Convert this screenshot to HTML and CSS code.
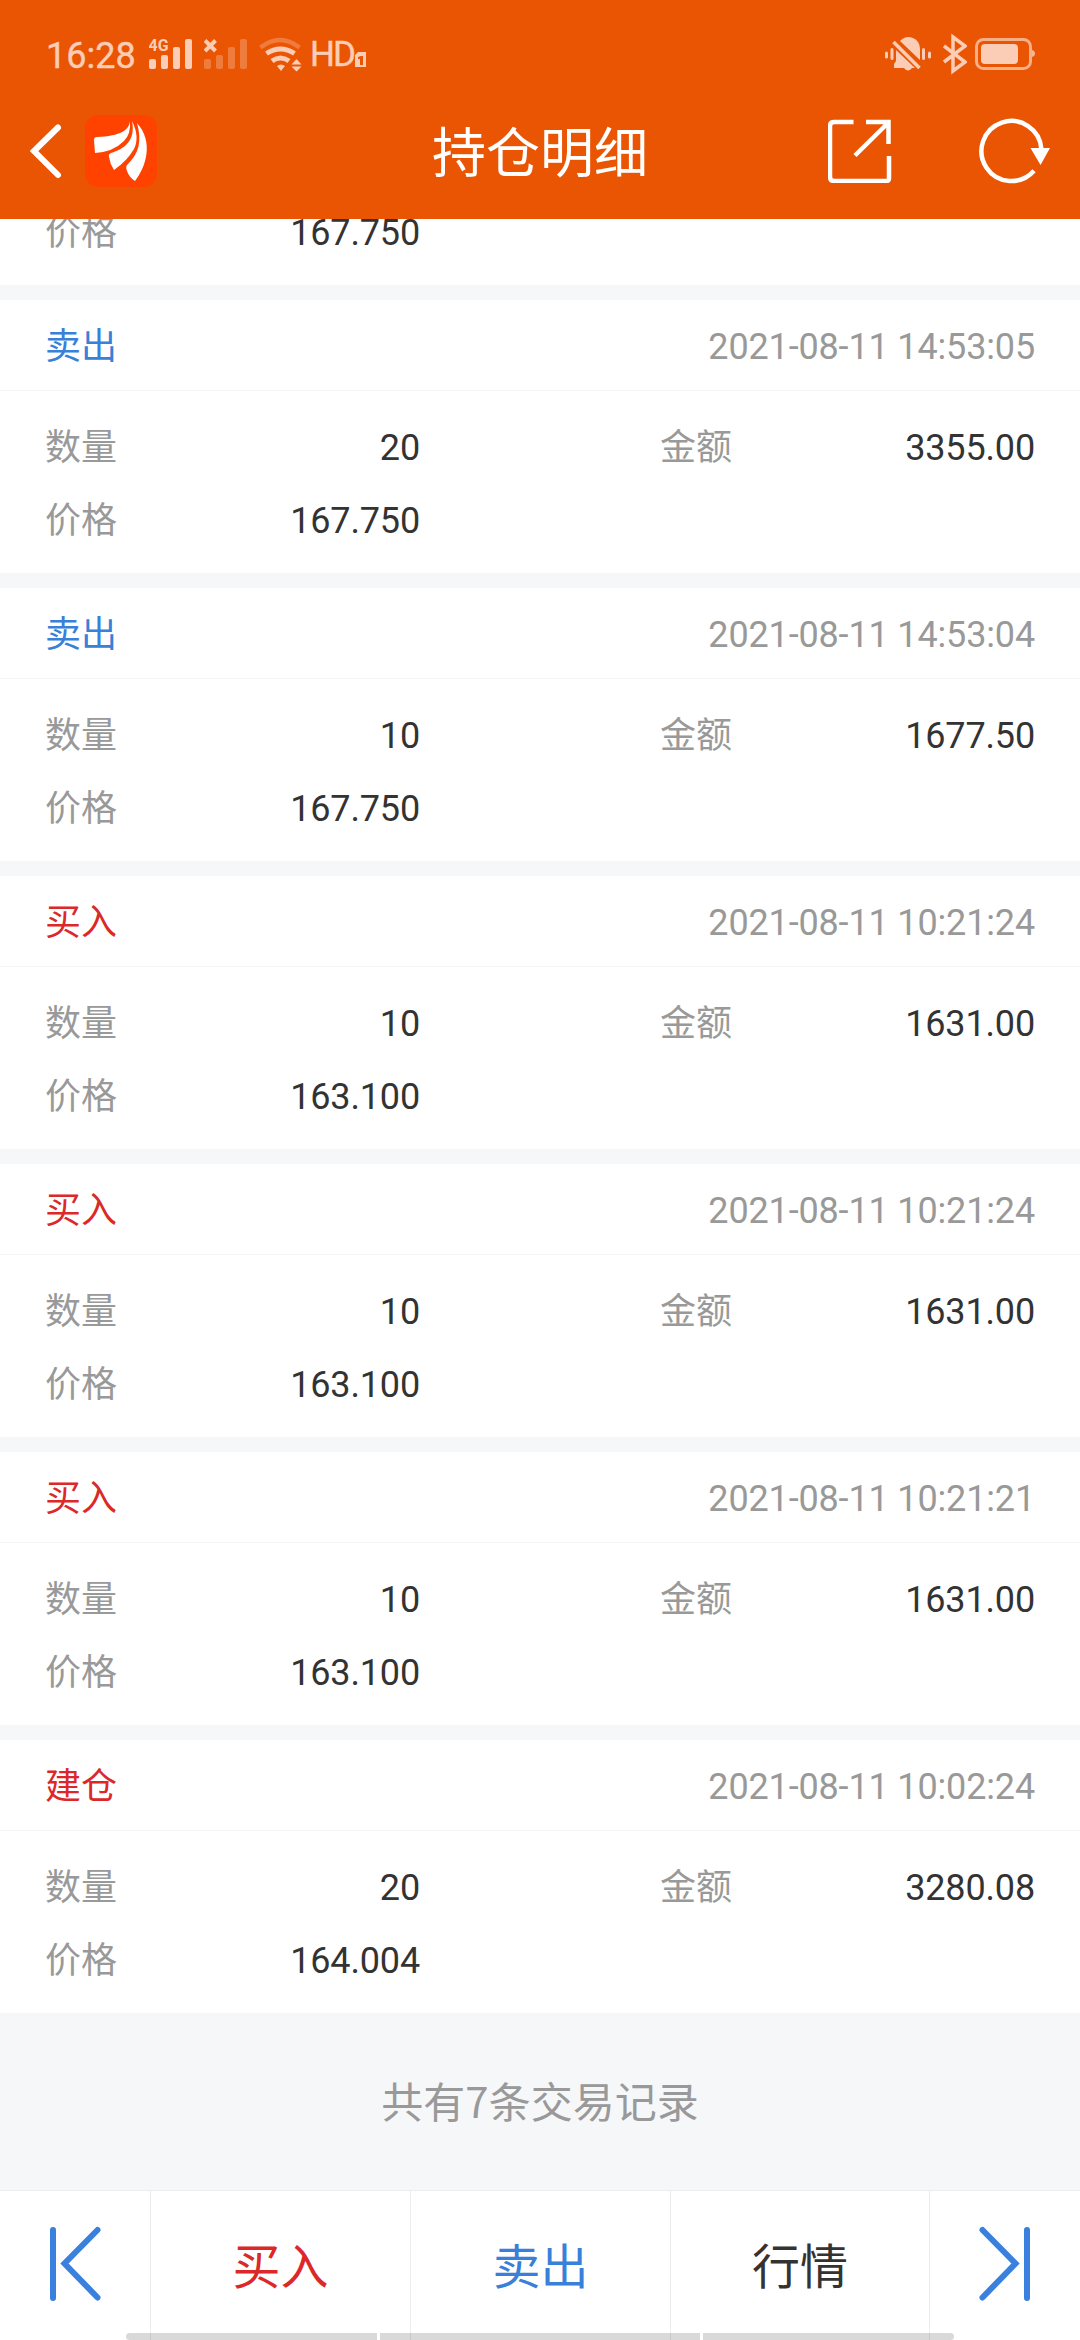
FILE: index.html
```html
<!DOCTYPE html>
<html lang="zh-CN">
<head>
<meta charset="utf-8">
<title>持仓明细</title>
<link rel="stylesheet" href="styles.css">
</head>
<body>
<div class="app">
  <header class="top">
    <div class="status">
      <span class="time">16:28</span>
      <svg class="signal" width="44" height="40" viewBox="149 34 44 40">
        <text class="net" x="148.500" y="51" textLength="20" lengthAdjust="spacingAndGlyphs">4G</text>
        <rect x="149" y="59" width="7" height="10" rx="2"/><rect x="161" y="55" width="7" height="14" rx="2"/><rect x="173" y="47" width="7" height="22" rx="2"/><rect x="185" y="39" width="7" height="30" rx="2"/>
      </svg>
      <svg class="signal-off" width="44" height="40" viewBox="204 34 44 40">
        <path class="line" stroke-width="4" d="M205 40.500l10.500 10.500M215.500 40.500l-10.500 10.500"/>
        <g opacity=".32"><rect x="204" y="59" width="7" height="10" rx="2"/><rect x="216" y="55" width="7" height="14" rx="2"/><rect x="228" y="47" width="7" height="22" rx="2"/><rect x="240" y="39" width="7" height="30" rx="2"/></g>
      </svg>
      <svg class="wifi" width="44" height="40" viewBox="259 34 44 40">
        <path class="line" opacity=".32" stroke-width="4.500" d="M260.500 47.500Q280 32.500 299.500 47.500"/>
        <path class="line" stroke-width="5" d="M266.500 53.500Q280.500 44.500 294.500 53.500M272 61Q280.500 55 289 61"/>
        <path d="M277 66q4-3 8 0l-4 5zM291.500 64.500l5-5.500 5 5.500zM291.500 66.500h10l-5 5z"/>
      </svg>
      <span class="hd">HD</span>
      <svg class="sim" width="12" height="40" viewBox="355 34 12 40">
        <path fill-rule="evenodd" d="M358 52h8v15h-11V55zM358 57v2h2v6h3v-9h-2z"/>
      </svg>
      <svg class="mute" width="48" height="44" viewBox="884 32 48 44">
        <path d="M896 50l19 18h-3q-4 5-8 0h-10v-4l2-3zM900 41q6-6 13-3 7 3 7 11v11z"/>
        <path class="line" stroke-width="3.500" d="M893.500 42l26 26"/>
        <path class="line" stroke-width="3" stroke-linecap="round" d="M886.500 53v4M892 49.500v9M923.500 49.500v9M929.500 53v4"/>
      </svg>
      <svg class="bluetooth" width="24" height="44" viewBox="943 32 24 44">
        <path class="line" stroke-width="3.500" d="M944 46l21 16-12 9V37l12 9-21 16"/>
      </svg>
      <svg class="battery" width="62" height="44" viewBox="974 32 62 44">
        <rect class="line" opacity=".75" stroke-width="3" x="976.500" y="39.500" width="54" height="29" rx="7"/>
        <rect x="981" y="44" width="37" height="20" rx="4"/><path opacity=".8" d="M1032 50q3 1 3 3.500t-3 3.500z"/>
      </svg>
    </div>
    <nav class="titlebar">
      <svg class="back" width="34" height="60" viewBox="29 121 34 60"><path d="M58 127.500L34 151l24 24" fill="none" stroke="#fff" stroke-width="6" stroke-linecap="round"/></svg>
      <svg class="logo" width="72" height="72" viewBox="0 0 72 72">
        <rect width="72" height="72" rx="13" fill="#ff4200"/>
        <path fill="#fff" d="M45 6C44 15 36 21 12 22Q9 22 9 25L10 38Q28 37 39 26Q46 19 45 6ZM47 6C51 26 39 34 26 38Q23 39 24 42Q25 49 29 55Q42 46 49 34Q55 22 47 6ZM52 8C57 26 54 38 43 49Q40 51 42 56Q44 62 50 66C61 52 69 27 52 8Z"/>
      </svg>
      <h1>持仓明细</h1>
      <svg class="share" width="64" height="64" viewBox="828 119 64 64"><path d="M853.500 122H834q-4 0-4 4v51q0 4 4 4h52.500q2.500 0 2.500-3V156M866 122h22.500v22M888 123l-33 32.500" fill="none" stroke="#fff" stroke-width="4.500"/></svg>
      <svg class="refresh" width="72" height="66" viewBox="978 118 72 66"><path d="M1034 170.800A30 30 0 1 1 1041.400 149" fill="none" stroke="#fff" stroke-width="4.500"/><path fill="#fff" d="M1030.500 148h19.500l-9.500 17z"/></svg>
    </nav>
  </header>

  <main class="list">
    <section class="card cut">
      <div class="row"><div class="pair"><span class="label">价格</span><span>167.750</span></div></div>
    </section>
    <section class="card">
      <div class="head"><b class="sell">卖出</b><time>2021-08-11 14:53:05</time></div>
      <div class="row"><div class="pair"><span class="label">数量</span><span>20</span></div><div class="pair"><span class="label">金额</span><span>3355.00</span></div></div>
      <div class="row"><div class="pair"><span class="label">价格</span><span>167.750</span></div></div>
    </section>
    <section class="card">
      <div class="head"><b class="sell">卖出</b><time>2021-08-11 14:53:04</time></div>
      <div class="row"><div class="pair"><span class="label">数量</span><span>10</span></div><div class="pair"><span class="label">金额</span><span>1677.50</span></div></div>
      <div class="row"><div class="pair"><span class="label">价格</span><span>167.750</span></div></div>
    </section>
    <section class="card">
      <div class="head"><b class="buy">买入</b><time>2021-08-11 10:21:24</time></div>
      <div class="row"><div class="pair"><span class="label">数量</span><span>10</span></div><div class="pair"><span class="label">金额</span><span>1631.00</span></div></div>
      <div class="row"><div class="pair"><span class="label">价格</span><span>163.100</span></div></div>
    </section>
    <section class="card">
      <div class="head"><b class="buy">买入</b><time>2021-08-11 10:21:24</time></div>
      <div class="row"><div class="pair"><span class="label">数量</span><span>10</span></div><div class="pair"><span class="label">金额</span><span>1631.00</span></div></div>
      <div class="row"><div class="pair"><span class="label">价格</span><span>163.100</span></div></div>
    </section>
    <section class="card">
      <div class="head"><b class="buy">买入</b><time>2021-08-11 10:21:21</time></div>
      <div class="row"><div class="pair"><span class="label">数量</span><span>10</span></div><div class="pair"><span class="label">金额</span><span>1631.00</span></div></div>
      <div class="row"><div class="pair"><span class="label">价格</span><span>163.100</span></div></div>
    </section>
    <section class="card">
      <div class="head"><b class="buy">建仓</b><time>2021-08-11 10:02:24</time></div>
      <div class="row"><div class="pair"><span class="label">数量</span><span>20</span></div><div class="pair"><span class="label">金额</span><span>3280.08</span></div></div>
      <div class="row"><div class="pair"><span class="label">价格</span><span>164.004</span></div></div>
    </section>
  </main>
  <p class="total">共有7条交易记录</p>

  <footer class="tabs">
    <a class="tab"><svg width="52" height="76" viewBox="0 0 52 76"><path d="M4 4v68M48.500 4L15.500 37.500l33 34"/></svg></a>
    <a class="tab buy">买入</a>
    <a class="tab sell">卖出</a>
    <a class="tab">行情</a>
    <a class="tab"><svg width="52" height="76" viewBox="0 0 52 76"><path d="M48 4v68M3.500 4l33 33.500-33 34"/></svg></a>
  </footer>
  <div class="gesture"><i></i><i></i><i></i></div>
</div>
</body>
</html>
```

FILE: styles.css
```css
* { box-sizing: border-box; margin: 0; padding: 0; }
body {
  width: 1080px;
  background: #f6f7f9;
  color: #333;
  font: 36px/1 Roboto, "Noto Sans CJK SC", sans-serif;
}
.app {
  position: relative;
  display: flex;
  flex-direction: column;
  height: 2340px;
  overflow: hidden;
}
svg { display: block; flex: none; }

.top { flex: none; height: 219px; background: #ea5503; color: #fff; }
.status {
  display: flex;
  align-items: center;
  height: 108px;
  padding: 0 44px 0 46px;
  color: #fbcdb6;
}
.status svg { fill: #fbcdb6; }
.status .line { fill: none; stroke: #fbcdb6; }
.time { width: 90px; font-size: 36px; line-height: 44px; margin-top: 4px; white-space: nowrap; -webkit-text-stroke: .4px; }
.net { font: bold 16px Roboto, sans-serif; }
.signal { margin-left: 13px; }
.signal-off { margin-left: 11px; }
.wifi { margin-left: 11px; }
.hd { width: 45px; margin: 1px 0 0 7px; font-size: 35px; letter-spacing: -2px; -webkit-text-stroke: .4px; }
.mute { margin-left: auto; }
.bluetooth { margin-left: 11px; }
.battery { margin-left: 7px; }

.titlebar { display: flex; align-items: center; height: 86px; padding: 0 30px 0 29px; }
.logo { margin-left: 22px; }
h1 {
  flex: none;
  width: 220px;
  margin: -2px 0 0 273px;
  font: 400 54px/80px "Noto Sans CJK SC", sans-serif;
  white-space: nowrap;
  text-align: center;
}
.share { margin: 0 86px 0 178px; }

.list { flex: none; display: flex; flex-direction: column; gap: 15px; }
.card { height: 273px; background: #fff; }
/* The first record is scrolled partly under the title bar */
.card.cut { height: 66px; overflow: hidden; display: flex; align-items: flex-start; }
.cut .row { flex: 1; margin-top: -23px; }
.head {
  display: flex;
  align-items: center;
  justify-content: space-between;
  height: 91px;
  margin-bottom: 20px;
  padding: 3px 45px 0;
  border-bottom: 1px solid #f4f5f7;
}
.head b { font-weight: 400; }
time, .label { color: #999; }
.row {
  display: flex;
  align-items: center;
  justify-content: space-between;
  height: 73px;
  padding: 0 45px;
}
.pair { display: flex; align-items: center; justify-content: space-between; width: 375px; }
.pair span, .head b, time { line-height: 54px; }
time, .label + span { letter-spacing: -.15px; }
.buy { color: #dc2828; }
.sell { color: #3980d8; }

.total {
  flex: 1;
  padding-top: 57px;
  color: #999;
  font: 42px/60px "Noto Sans CJK SC", sans-serif;
  text-align: center;
}
.tabs {
  flex: none;
  display: grid;
  grid-template-columns: 150px 260px 260px 259px 151px;
  height: 150px;
  background: #fff;
  border-top: 1px solid #ebecee;
  font: 48px/70px "Noto Sans CJK SC", sans-serif;
}
.tab { display: flex; align-items: center; justify-content: center; padding-bottom: 6px; }
.tab + .tab { border-left: 1px solid #ececec; }
.tab svg { margin-top: 2px; fill: none; stroke: #3980df; stroke-width: 6; stroke-linecap: round; }

/* System gesture hints lie over the tab bar */
.gesture { position: absolute; left: 126px; bottom: 0; display: flex; gap: 3px; }
.gesture i { width: 251px; height: 7px; background: rgba(0, 0, 0, .15); }
.gesture i:nth-child(2) { width: 320px; }
.gesture i:first-child { border-radius: 4px 0 0 4px; }
.gesture i:last-child { border-radius: 0 4px 4px 0; }
```
